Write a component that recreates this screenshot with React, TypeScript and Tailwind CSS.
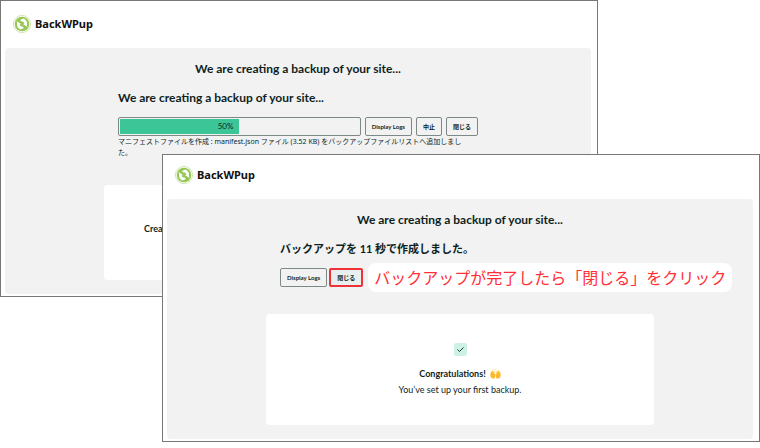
import React from 'react';

const headingText = 'We are creating a backup of your site...';

const LogoMark: React.FC = () => (
  <svg className="size-[18px]" viewBox="0 0 36 36" aria-hidden="true">
    <circle cx="18" cy="18" r="17" fill="none" stroke="#b9d98a" strokeWidth="1.5" />
    <circle cx="18" cy="18" r="14.5" fill="#96c757" />
    <g fill="#fff">
      <path d="M14 10 L21 7 C26 9 29 14 28 21 L29 24 L20 18 L23 17 C22 14 20 13 17 13 Z" />
      <path d="M22 26 L15 29 C10 27 7 22 8 15 L7 12 L16 18 L13 19 C14 22 16 23 19 23 Z" />
    </g>
  </svg>
);

const RaisedHands: React.FC = () => (
  <svg className="h-[10px] w-[11px]" viewBox="0 0 22 20" role="img" aria-label="raised hands">
    <g fill="#fbb92b">
      <path d="M9 19 H4 C1 16 0 13 1 9 L2 5 L3 5 L4 8 L4 3 L6 3 L7 8 L8 4 L9 5 L9 10 L11 11 C11 14 10 16 9 19 Z" />
      <path d="M13 19 H18 C21 16 22 13 21 9 L20 5 L19 5 L18 8 L18 3 L16 3 L15 8 L14 4 L13 5 L13 10 L11 11 C11 14 12 16 13 19 Z" />
    </g>
    <path d="M9 2 L8 0 M11 2 V0 M13 2 L14 0" stroke="#f6c860" strokeWidth="1" />
  </svg>
);

type WindowProps = {
  className?: string;
  headerClassName: string;
  children: React.ReactNode;
};

const BackupWindow: React.FC<WindowProps> = ({ className = '', headerClassName, children }) => (
  <section className={`border border-[#777] bg-white pr-[6px] pb-[2px] pl-1 ${className}`}>
    <header className={`flex items-center gap-1 pl-2 ${headerClassName}`}>
      <LogoMark />
      <span className="font-['Noto_Sans',sans-serif] text-[11px] leading-4 font-bold text-[#111]">
        BackWPup
      </span>
    </header>
    <div className="rounded bg-[#f2f2f2] px-4 pt-3 pb-[14px]">
      <h1 className="text-center text-[12px] leading-[18px] font-bold">{headingText}</h1>
      {children}
    </div>
  </section>
);

type ActionButtonProps = {
  className?: string;
  children: React.ReactNode;
};

const ActionButton: React.FC<ActionButtonProps> = ({
  className = 'border border-[#7d8987]',
  children,
}) => (
  <button
    type="button"
    className={`h-[19px] shrink-0 rounded-[2px] px-[6px] text-[6px] leading-3 font-bold whitespace-nowrap ${className}`}
  >
    {children}
  </button>
);

const App: React.FC = () => {
  const progress = 50;

  return (
    <main className="min-h-screen bg-white pb-1 font-[Lato,'Noto_Sans_CJK_JP',sans-serif] text-[#0f1f1d]">
      <BackupWindow className="mr-[162px]" headerClassName="mb-px h-[46px]">
        <div className="mx-auto max-w-[360px]">
          <h2 className="mt-[11px] text-[12px] leading-[18px] font-bold">{headingText}</h2>
          <div className="mt-[10px] flex gap-1">
            <div
              role="progressbar"
              aria-label="Backup progress"
              aria-valuenow={progress}
              className="h-[19px] flex-1 rounded-[2px] border border-[#7d8987] p-px"
            >
              <div
                className="h-full bg-[#3cc597] pr-[6px] text-right text-[8px] leading-[15px]"
                style={{ width: `${progress}%` }}
              >
                {progress}%
              </div>
            </div>
            <ActionButton>Display Logs</ActionButton>
            <ActionButton>中止</ActionButton>
            <ActionButton>閉じる</ActionButton>
          </div>
          <p className="pr-4 font-['Noto_Sans','Noto_Sans_CJK_JP',sans-serif] text-[7px] leading-[11px]">
            マニフェストファイルを作成 : manifest.json ファイル (3.52 KB) をバックアップファイルリストへ追加しました。
          </p>
        </div>
        <div className="mx-auto mt-[27px] h-[95px] max-w-[388px] rounded bg-white px-10 pt-9">
          <p className="text-[9px] leading-4 font-bold">Creating your first backup</p>
        </div>
      </BackupWindow>

      <BackupWindow className="relative -mt-[143px] ml-[162px]" headerClassName="mb-1 h-10">
        <div className="mx-auto max-w-[360px]">
          <h2 className="mt-[11px] text-[11px] leading-[18px] font-bold">
            バックアップを 11 秒で作成しました。
          </h2>
          <div className="mt-[5px] flex items-center gap-[2px]">
            <ActionButton>Display Logs</ActionButton>
            <ActionButton className="border-2 border-[#ee3338] bg-[#e9eeee]">閉じる</ActionButton>
            <p className="ml-[3px] shrink-0 rounded-lg bg-white px-[6px] text-[16px] leading-[29px] font-normal whitespace-nowrap text-[#ff2f35]">
              バックアップが完了したら「閉じる」をクリック
            </p>
          </div>
        </div>
        <div className="mx-auto mt-[22px] flex h-[111px] max-w-[388px] flex-col items-center rounded bg-white pt-[29px]">
          <div className="flex size-[13px] items-center justify-center rounded-[2px] bg-[#cdf1e5]">
            <svg className="size-[9px]" viewBox="0 0 18 18" fill="none" stroke="#173b34" strokeWidth="2" aria-hidden="true">
              <path d="M3 9 L7 13 L15 5" />
            </svg>
          </div>
          <p className="mt-[10px] flex items-center gap-1 text-[9px] leading-4 font-bold">
            Congratulations! <RaisedHands />
          </p>
          <p className="text-[9px] leading-4">You’ve set up your first backup.</p>
        </div>
      </BackupWindow>
    </main>
  );
};

export default App;
